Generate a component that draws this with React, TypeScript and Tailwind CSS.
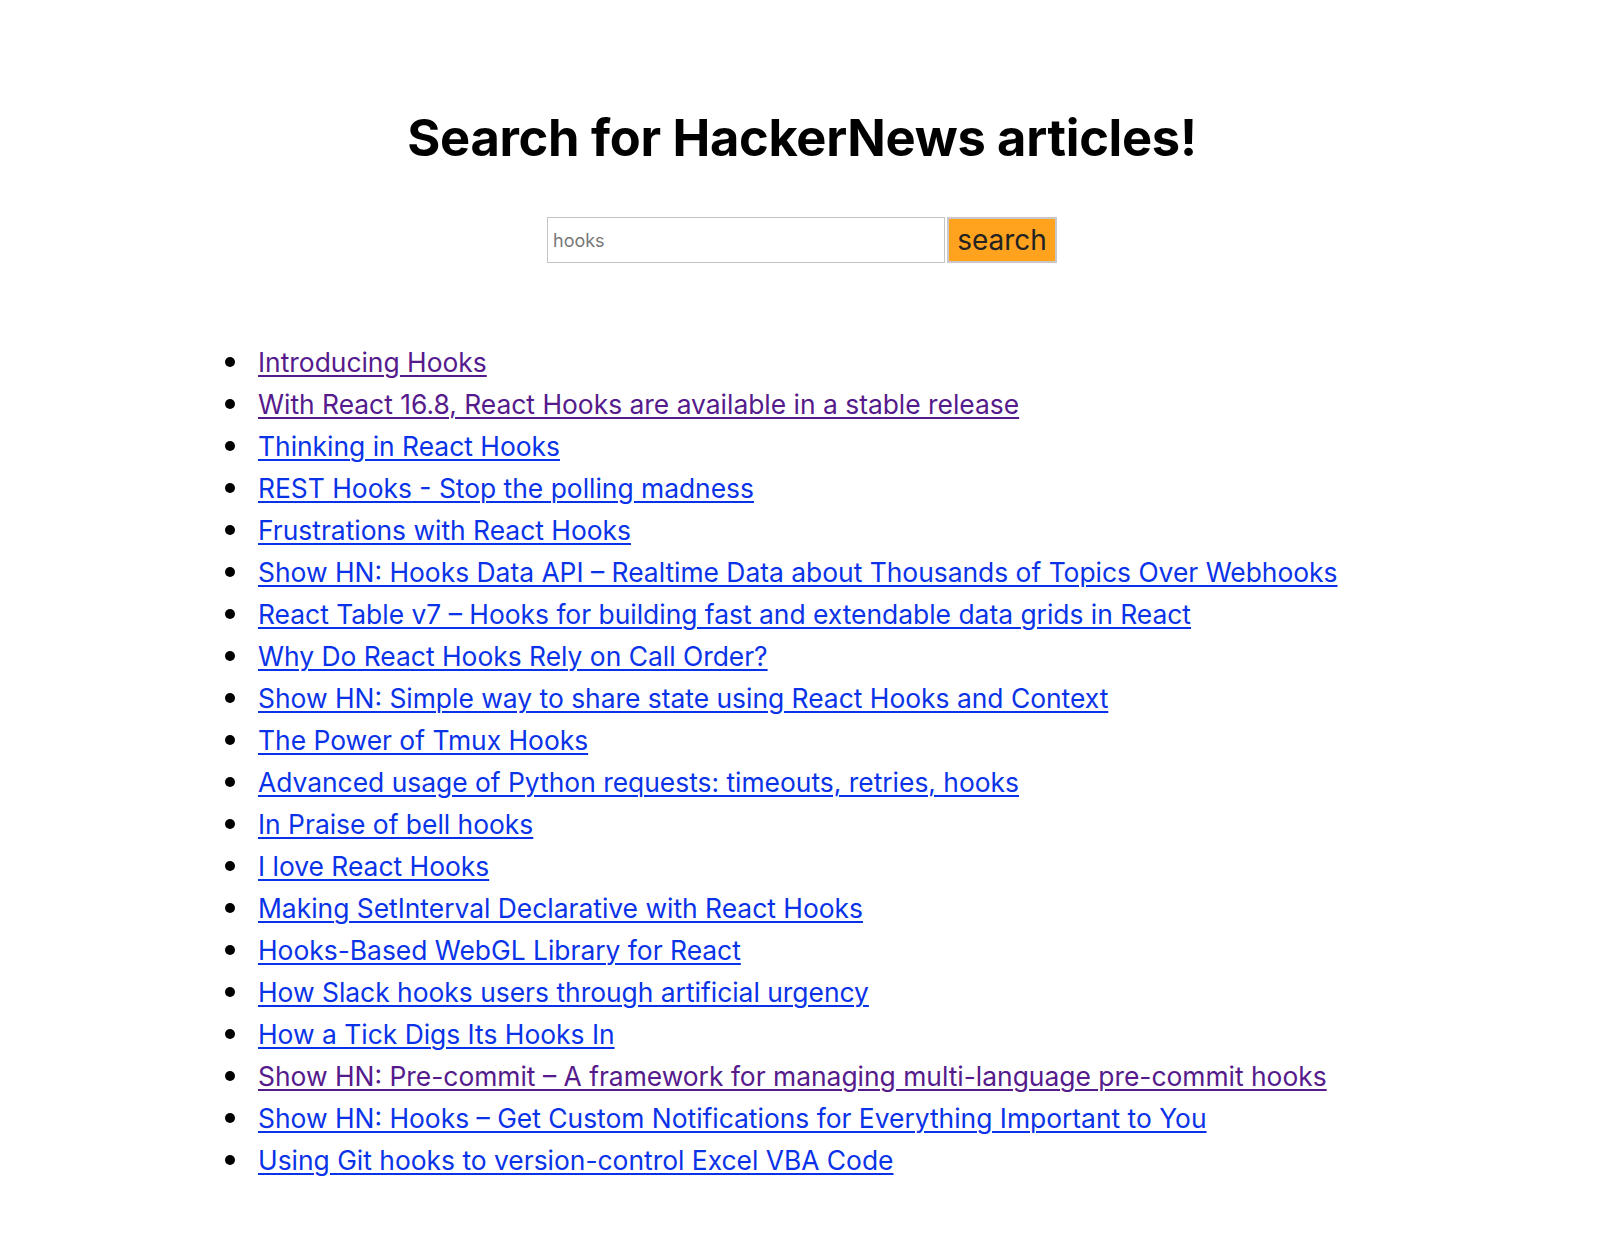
import React from "react";

const items: { t: string; v?: boolean }[] = [
  { t: "Introducing Hooks", v: true },
  { t: "With React 16.8, React Hooks are available in a stable release", v: true },
  { t: "Thinking in React Hooks" },
  { t: "REST Hooks - Stop the polling madness" },
  { t: "Frustrations with React Hooks" },
  { t: "Show HN: Hooks Data API – Realtime Data about Thousands of Topics Over Webhooks" },
  { t: "React Table v7 – Hooks for building fast and extendable data grids in React" },
  { t: "Why Do React Hooks Rely on Call Order?" },
  { t: "Show HN: Simple way to share state using React Hooks and Context" },
  { t: "The Power of Tmux Hooks" },
  { t: "Advanced usage of Python requests: timeouts, retries, hooks" },
  { t: "In Praise of bell hooks" },
  { t: "I love React Hooks" },
  { t: "Making SetInterval Declarative with React Hooks" },
  { t: "Hooks-Based WebGL Library for React" },
  { t: "How Slack hooks users through artificial urgency" },
  { t: "How a Tick Digs Its Hooks In" },
  { t: "Show HN: Pre-commit – A framework for managing multi-language pre-commit hooks", v: true },
  { t: "Show HN: Hooks – Get Custom Notifications for Everything Important to You" },
  { t: "Using Git hooks to version-control Excel VBA Code" },
];

export default function App() {
  return (
    <div className="min-h-[1260px] bg-white text-black" style={{ fontFamily: "Inter, 'Noto Sans', sans-serif" }}>
      <div className="pt-[108px]">
        <h1 className="pr-[6px] text-center text-[50.6px] font-bold leading-[60px] tracking-[-0.3px]">Search for HackerNews articles!</h1>
        <div className="mt-[49px] flex justify-center pr-[6px]">
          <input
            className="h-[46px] w-[398px] border border-[#c4c4c4] px-[5px] text-[18px] text-black placeholder:text-[#777] outline-none"
            placeholder="hooks"
          />
          <button className="ml-[2px] h-[46px] w-[110px] border-2 border-[#c8c8c8] bg-[#ffa31e] text-[28px] leading-none text-[#222]">
            search
          </button>
        </div>
        <ul className="ml-[225px] mt-[78px] text-[26.4px] leading-[42px]">
          {items.map((it, i) => (
            <li key={i} className="flex items-center whitespace-nowrap">
              <span className="mr-[23px] h-[10px] w-[10px] shrink-0 rounded-full bg-black" />
              <a
                href="#"
                className={
                  "underline decoration-[1.5px] underline-offset-[3px] " +
                  (it.v ? "text-[#551a8b]" : "text-[#0a33e8]")
                }
              >
                {it.t}
              </a>
            </li>
          ))}
        </ul>
      </div>
    </div>
  );
}
